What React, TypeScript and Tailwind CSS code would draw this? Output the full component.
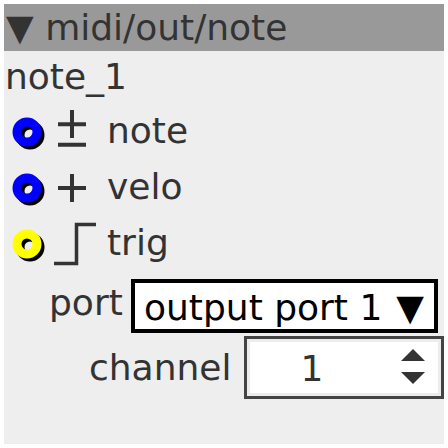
const font = { fontFamily: '"DejaVu Sans", sans-serif' };

function Port({ color }: { color: string }) {
  return (
    <svg width="36" height="36" viewBox="0 0 36 36" className="shrink-0">
      <circle cx="18" cy="18" r="10" fill="none" stroke="#000" strokeWidth="9" />
      <circle cx="15" cy="15" r="10" fill="none" stroke={color} strokeWidth="9" />
    </svg>
  );
}

function PlusMinus() {
  return (
    <svg width="30" height="40" viewBox="0 0 30 40">
      <path d="M15 2 V30 M1 16.3 H29 M1 36.7 H29" stroke="#333" strokeWidth="4" fill="none" />
    </svg>
  );
}

function Plus() {
  return (
    <svg width="30" height="32" viewBox="0 0 30 32">
      <path d="M15 2 V30 M1 16 H29" stroke="#333" strokeWidth="4" fill="none" />
    </svg>
  );
}

function StepIcon() {
  return (
    <svg width="46" height="48" viewBox="0 0 46 48">
      <path d="M2 43.5 H24.5 V4.5 H44" fill="none" stroke="#333" strokeWidth="3.5" />
    </svg>
  );
}

export default function App() {
  return (
    <div className="w-[448px] h-[448px] bg-white p-1" style={font}>
      <div className="w-[440px] h-[440px] bg-[#eeeeee] flex flex-col text-[36px] text-[#333]">
        <div className="h-[47px] bg-[#999999] pl-[2px] leading-[47px] whitespace-nowrap">
          ▼ midi/out/note
        </div>
        <div className="h-[51px] leading-[51px] pl-[1px]">note_1</div>

        <div className="h-[56px] flex items-start">
          <div className="ml-[8px] mt-[15px]"><Port color="#0000ff" /></div>
          <div className="w-[59px] pl-[9px] pt-[6px]"><PlusMinus /></div>
          <span className="leading-[56px] mt-[1px]">note</span>
        </div>
        <div className="h-[56px] flex items-start">
          <div className="ml-[8px] mt-[15px]"><Port color="#0000ff" /></div>
          <div className="w-[59px] pl-[9px] pt-[14px]"><Plus /></div>
          <span className="leading-[56px] mt-[1px]">velo</span>
        </div>
        <div className="h-[56px] flex items-start">
          <div className="ml-[8px] mt-[15px]"><Port color="#ffff00" /></div>
          <div className="w-[59px] pl-[4px] pt-[6px]"><StepIcon /></div>
          <span className="leading-[56px] mt-[1px]">trig</span>
        </div>

        <div className="flex items-start mt-[9px] h-[54px]">
          <span className="ml-[45px] w-[82px] leading-[48px]">port</span>
          <div className="w-[307px] h-[54px] border-[4px] border-black bg-white flex items-start justify-between pl-[9px] pr-[10px] text-black leading-[42px] pt-[4px] whitespace-nowrap">
            <span>output port 1</span>
            <span>▼</span>
          </div>
        </div>

        <div className="flex items-start mt-[3px]">
          <span className="ml-[85px] w-[155px] leading-[56px] mt-[4px]">channel</span>
          <div className="w-[200px] h-[63px] border-[3px] border-[#444] bg-white">
            <div className="w-full h-full border-[3px] border-[#ececec] flex items-start">
              <span className="w-[124px] text-center leading-[46px] pt-[4px]">1</span>
              <div className="ml-[27px] mt-[7px] flex flex-col gap-[11px]">
                <svg width="24" height="12" viewBox="0 0 24 12"><path d="M12 0 L24 12 H0 Z" fill="#333" /></svg>
                <svg width="24" height="12" viewBox="0 0 24 12"><path d="M0 0 H24 L12 12 Z" fill="#333" /></svg>
              </div>
            </div>
          </div>
        </div>
      </div>
    </div>
  );
}
